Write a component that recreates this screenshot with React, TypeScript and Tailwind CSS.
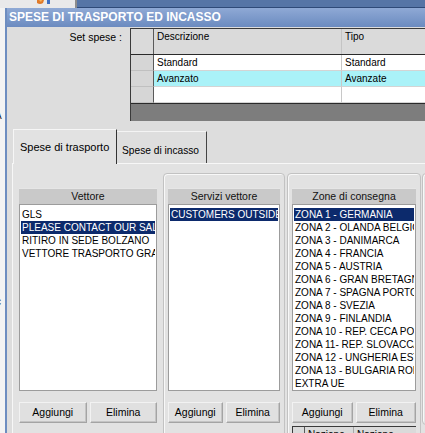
import React from 'react';

const vettori = ['GLS', 'PLEASE CONTACT OUR SALES', 'RITIRO IN SEDE BOLZANO', 'VETTORE TRASPORTO GRATUITO'];
const servizi = ['CUSTOMERS OUTSIDE EU'];
const zone = [
  'ZONA 1 - GERMANIA',
  'ZONA 2 - OLANDA BELGIO',
  'ZONA 3 - DANIMARCA',
  'ZONA 4 - FRANCIA',
  'ZONA 5 - AUSTRIA',
  'ZONA 6 - GRAN BRETAGNA',
  'ZONA 7 - SPAGNA PORTOGALLO',
  'ZONA 8 - SVEZIA',
  'ZONA 9 - FINLANDIA',
  'ZONA 10 - REP. CECA POLONIA',
  'ZONA 11- REP. SLOVACCA',
  'ZONA 12 - UNGHERIA ESTONIA',
  'ZONA 13 - BULGARIA ROMANIA',
  'EXTRA UE',
];

function ListHeader({ title }: { title: string }) {
  return (
    <div className="h-[16px] bg-[#c9c9c9] border-t border-[#e6e6e6] text-center text-[10.5px] leading-[15px] text-[#111]">
      {title}
    </div>
  );
}

function ListBox({ items, selected }: { items: string[]; selected: number }) {
  return (
    <div className="h-[187px] bg-white border border-[#9c9c9c] pt-[3px] overflow-hidden">
      {items.map((item, i) => (
        <div
          key={item}
          className={
            i === selected
              ? 'mx-[1px] h-[13px] leading-[13px] pl-[1px] text-[10px] whitespace-nowrap overflow-hidden bg-[#0c2a6c] text-white'
              : 'mx-[1px] h-[13px] leading-[13px] pl-[1px] text-[10px] whitespace-nowrap overflow-hidden text-black'
          }
        >
          {item}
        </div>
      ))}
    </div>
  );
}

function Buttons() {
  return (
    <div className="mt-[11px] flex gap-[3px]">
      <button className="flex-1 h-[21px] bg-[#e0e0e0] border border-[#a4a4a4] border-t-[#f2f2f2] border-l-[#f2f2f2] shadow-[inset_-1px_-1px_0_#c4c4c4] text-[10.5px] text-black">
        Aggiungi
      </button>
      <button className="flex-1 h-[21px] bg-[#e0e0e0] border border-[#a4a4a4] border-t-[#f2f2f2] border-l-[#f2f2f2] shadow-[inset_-1px_-1px_0_#c4c4c4] text-[10.5px] text-black">
        Elimina
      </button>
    </div>
  );
}

export default function App() {
  const rows = [
    { desc: 'Standard', tipo: 'Standard', bg: 'bg-white' },
    { desc: 'Avanzato', tipo: 'Avanzate', bg: 'bg-[#aaf2f8]' },
    { desc: '', tipo: '', bg: 'bg-white' },
  ];

  return (
    <div className="w-[425px] h-[433px] overflow-hidden flex flex-col bg-[#ececec] font-['Liberation_Sans',Arial,sans-serif] text-black">
      {/* desktop strip behind the window */}
      <div className="h-[8px] flex shrink-0">
        <div className="w-[75px] bg-[#e9e9ea] flex">
          <svg width="20" height="8" viewBox="0 0 20 8" className="ml-[34px]">
            <path d="M3 0 L10 0 L9 3 Q6 5 3 3 Z" fill="#e07a2a" />
            <path d="M5 0 L8 0 L7 2 Z" fill="#f6b35a" />
            <rect x="13" y="0" width="3" height="4" fill="#3d6fc4" />
          </svg>
        </div>
        <div className="w-[2px] bg-[#8c8c8c]" />
        <div className="flex-1 bg-[#5675a6] border-b border-[#2f4a78]" />
      </div>

      <div className="flex flex-1 min-h-0">
        {/* left gutter with clipped background text */}
        <div className="w-[5px] shrink-0 bg-[#f3f3f3] overflow-hidden flex flex-col text-[10px] leading-[10px] text-[#222]">
          <span className="mt-[103px] -ml-[5px]">A</span>
          <span className="mt-[176px] -ml-[4px]">c</span>
        </div>

        {/* window */}
        <div className="flex-1 min-w-0 flex flex-col border-l-2 border-[#6d8dc0] bg-[#dddddd] overflow-hidden">
          <div className="h-[19px] shrink-0 bg-gradient-to-b from-[#8fa9d5] to-[#6b8bc0] pl-[2px] text-white font-bold text-[12px] leading-[19px] whitespace-nowrap">
            SPESE DI TRASPORTO ED INCASSO
          </div>

          {/* set spese + grid */}
          <div className="flex mt-[1px] shrink-0">
            <div className="w-[123px] shrink-0 text-right pr-[8px] pt-[3px] text-[10.5px] leading-[12px]">
              Set spese :
            </div>
            <div className="w-[320px] shrink-0 border-t border-l border-[#3a3a3a] flex flex-col">
              <div className="h-[26px] flex bg-[#dadada] border-b border-[#2a2a2a]">
                <div className="w-[23px] border-r border-[#5a5a5a]" />
                <div className="w-[188px] border-r border-[#c4c4c4] pl-[3px] pt-[2px] text-[10px] leading-[12px]">
                  Descrizione
                </div>
                <div className="flex-1 pl-[3px] pt-[2px] text-[10px] leading-[12px]">Tipo</div>
              </div>
              {rows.map((r, i) => (
                <div key={i} className="h-[16px] flex">
                  <div className="w-[23px] bg-[#d6d6d6] border-r border-[#5a5a5a] border-b border-b-[#c0c0c0]" />
                  <div className={`w-[188px] ${r.bg} border-r border-[#c8c8c8] border-b border-b-[#d4d4d4] pl-[3px] text-[10px] leading-[15px]`}>
                    {r.desc}
                  </div>
                  <div className={`flex-1 ${r.bg} border-b border-[#d4d4d4] pl-[3px] text-[10px] leading-[15px]`}>
                    {r.tipo}
                  </div>
                </div>
              ))}
              <div className="h-[18px] bg-[#7d7d7d] border-t border-[#2a2a2a]" />
            </div>
          </div>

          {/* tabs */}
          <div className="flex items-end ml-[6px] mt-[8px] h-[34px] shrink-0">
            <div className="relative z-10 -mb-px w-[104px] h-[35px] bg-[#e2e2e2] border-t border-l border-[#f6f6f6] border-r border-r-[#333] pl-[6px] pt-[11px] text-[11px] leading-[13px] whitespace-nowrap">
              Spese di trasporto
            </div>
            <div className="w-[90px] h-[32px] bg-[#dedede] border-t border-[#f4f4f4] border-r border-r-[#444] pl-[5px] pt-[12px] text-[10.2px] leading-[13px] whitespace-nowrap">
              Spese di incasso
            </div>
          </div>

          {/* tab panel */}
          <div className="ml-[5px] flex-1 bg-[#e2e2e2] border-t border-l border-[#f7f7f7] flex items-start">
            <div className="ml-[6px] mt-[24px] w-[138px] shrink-0">
              <ListHeader title="Vettore" />
              <ListBox items={vettori} selected={1} />
              <Buttons />
            </div>

            <div className="ml-[6px] mt-[9px] w-[122px] h-[300px] shrink-0 border border-[#c2c2c2] rounded-[4px] shadow-[inset_1px_1px_0_#f8f8f8] px-[4px] pt-[14px]">
              <ListHeader title="Servizi vettore" />
              <ListBox items={servizi} selected={0} />
              <Buttons />
            </div>

            <div className="ml-[2px] mt-[9px] w-[134px] h-[300px] shrink-0 border border-[#c2c2c2] rounded-[4px] shadow-[inset_1px_1px_0_#f8f8f8] px-[4px] pt-[14px]">
              <ListHeader title="Zone di consegna" />
              <ListBox items={zone} selected={0} />
              <Buttons />
              <div className="mt-[3px] h-[20px] flex bg-[#dadada] border-t border-l border-[#3a3a3a] text-[10px] leading-[12px]">
                <div className="w-[12px] border-r border-[#5a5a5a]" />
                <div className="w-[49px] border-r border-[#a8a8a8] pl-[3px] pt-[2px] whitespace-nowrap overflow-hidden">Nazione</div>
                <div className="flex-1 pl-[3px] pt-[2px] whitespace-nowrap overflow-hidden">Nazione</div>
              </div>
            </div>

            <div className="ml-[1px] mt-[9px] w-[40px] h-[252px] shrink-0 border border-[#c2c2c2] rounded-[4px] shadow-[inset_1px_1px_0_#f8f8f8]" />
          </div>
        </div>
      </div>
    </div>
  );
}
